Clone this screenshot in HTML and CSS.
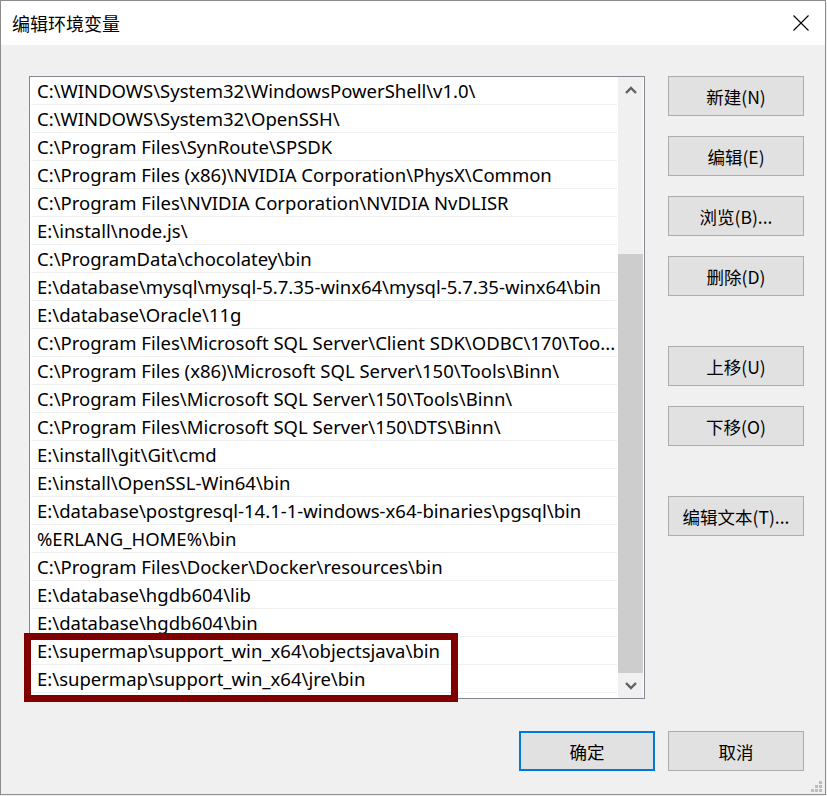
FILE: index.html
```html
<!DOCTYPE html>
<html lang="zh-CN">
<head>
<meta charset="utf-8">
<title>编辑环境变量</title>
<link rel="stylesheet" href="styles.css">
</head>
<body>
<div class="window">
  <div class="titlebar">
    <span class="title">编辑环境变量</span>
    <svg class="close" width="16" height="16" viewBox="0 0 16 16"><path d="M0.5 0.5 L15.5 15.5 M15.5 0.5 L0.5 15.5" stroke="#000" stroke-width="1.1" fill="none"/></svg>
  </div>
  <div class="content">
    <div class="main">
      <div class="listbox">
        <ul class="rows">
          <li class="row">C:\WINDOWS\System32\WindowsPowerShell\v1.0\</li>
          <li class="row">C:\WINDOWS\System32\OpenSSH\</li>
          <li class="row">C:\Program Files\SynRoute\SPSDK</li>
          <li class="row">C:\Program Files (x86)\NVIDIA Corporation\PhysX\Common</li>
          <li class="row">C:\Program Files\NVIDIA Corporation\NVIDIA NvDLISR</li>
          <li class="row">E:\install\node.js\</li>
          <li class="row">C:\ProgramData\chocolatey\bin</li>
          <li class="row">E:\database\mysql\mysql-5.7.35-winx64\mysql-5.7.35-winx64\bin</li>
          <li class="row">E:\database\Oracle\11g</li>
          <li class="row">C:\Program Files\Microsoft SQL Server\Client SDK\ODBC\170\Too...</li>
          <li class="row">C:\Program Files (x86)\Microsoft SQL Server\150\Tools\Binn\</li>
          <li class="row">C:\Program Files\Microsoft SQL Server\150\Tools\Binn\</li>
          <li class="row">C:\Program Files\Microsoft SQL Server\150\DTS\Binn\</li>
          <li class="row">E:\install\git\Git\cmd</li>
          <li class="row">E:\install\OpenSSL-Win64\bin</li>
          <li class="row">E:\database\postgresql-14.1-1-windows-x64-binaries\pgsql\bin</li>
          <li class="row">%ERLANG_HOME%\bin</li>
          <li class="row">C:\Program Files\Docker\Docker\resources\bin</li>
          <li class="row">E:\database\hgdb604\lib</li>
          <li class="row">E:\database\hgdb604\bin</li>
          <li class="row">E:\supermap\support_win_x64\objectsjava\bin</li>
          <li class="row">E:\supermap\support_win_x64\jre\bin</li>
        </ul>
        <div class="scrollbar">
          <div class="sb-btn">
            <svg width="12" height="8" viewBox="0 0 12 8"><path d="M1 7 L6 2 L11 7" stroke="#606060" stroke-width="2.4" fill="none"/></svg>
          </div>
          <div class="sb-track">
            <div class="sb-thumb"></div>
          </div>
          <div class="sb-btn">
            <svg width="12" height="8" viewBox="0 0 12 8"><path d="M1 1 L6 6 L11 1" stroke="#606060" stroke-width="2.4" fill="none"/></svg>
          </div>
        </div>
      </div>
      <div class="side">
        <div class="group">
          <button class="btn">新建(N)</button>
          <button class="btn">编辑(E)</button>
          <button class="btn">浏览(B)...</button>
          <button class="btn">删除(D)</button>
        </div>
        <div class="group">
          <button class="btn">上移(U)</button>
          <button class="btn">下移(O)</button>
        </div>
        <div class="group">
          <button class="btn">编辑文本(T)...</button>
        </div>
      </div>
    </div>
    <div class="footer">
      <button class="btn primary">确定</button>
      <button class="btn">取消</button>
    </div>
    <svg class="grip" width="12" height="12" viewBox="0 0 12 12">
      <rect x="8" y="0" width="3" height="3" fill="#bdbdbd"/>
      <rect x="4" y="4" width="3" height="3" fill="#bdbdbd"/>
      <rect x="8" y="4" width="3" height="3" fill="#bdbdbd"/>
      <rect x="0" y="8" width="3" height="3" fill="#bdbdbd"/>
      <rect x="4" y="8" width="3" height="3" fill="#bdbdbd"/>
      <rect x="8" y="8" width="3" height="3" fill="#bdbdbd"/>
    </svg>
  </div>
  <div class="highlight"></div>
</div>
</body>
</html>
```

FILE: styles.css
```css
html, body {
  margin: 0;
  padding: 0;
  background: #f0f0f0;
}
body {
  width: 827px;
  height: 796px;
  overflow: hidden;
  font-family: "Noto Sans", "Noto Sans CJK SC", sans-serif;
}
.window {
  position: relative;
  box-sizing: border-box;
  width: 826px;
  height: 795px;
  border: 1px solid #8c8c8c;
  background: #f0f0f0;
  display: flex;
  flex-direction: column;
}
.titlebar {
  height: 44px;
  background: #ffffff;
  display: flex;
  align-items: center;
  justify-content: space-between;
  padding: 0 16px 0 11px;
  flex-shrink: 0;
}
.title {
  font-family: "Noto Sans CJK SC", sans-serif;
  font-size: 18px;
  color: #000;
  margin-top: -1px;
}
.close {
  display: block;
  margin-top: -1px;
}
.content {
  position: relative;
  flex: 1;
  padding: 31px 0 0 28px;
  display: flex;
  flex-direction: column;
}
.main {
  display: flex;
  gap: 23px;
}
.listbox {
  box-sizing: border-box;
  width: 616px;
  height: 623px;
  border: 1px solid #828790;
  background: #ffffff;
  display: flex;
}
.rows {
  list-style: none;
  margin: 0;
  padding: 0 1px 0 0;
  flex: 1;
  min-width: 0;
}
.row {
  box-sizing: border-box;
  height: 28px;
  line-height: 27px;
  padding-left: 6px;
  margin-left: 1px;
  border-bottom: 1px solid #f0f0f0;
  font-size: 18.5px;
  color: #000;
  white-space: nowrap;
  overflow: hidden;
  text-overflow: clip;
}
.scrollbar {
  width: 25px;
  margin-right: 1px;
  background: #f0f0f0;
  display: flex;
  flex-direction: column;
}
.sb-btn {
  height: 25px;
  display: flex;
  align-items: center;
  justify-content: center;
  flex-shrink: 0;
}
.sb-track {
  flex: 1;
  display: flex;
  flex-direction: column;
  justify-content: flex-end;
}
.sb-thumb {
  height: 419px;
  background: #cdcdcd;
}
.side {
  display: flex;
  flex-direction: column;
  gap: 50px;
}
.group {
  display: flex;
  flex-direction: column;
  gap: 20px;
}
.btn {
  box-sizing: border-box;
  width: 136px;
  height: 40px;
  border: 1px solid #adadad;
  background: #e1e1e1;
  font-family: "Noto Sans CJK SC", sans-serif;
  font-size: 17.5px;
  color: #000;
  padding: 0;
  margin: 0;
}
.btn.primary {
  border: 2px solid #0078d7;
}
.footer {
  display: flex;
  justify-content: flex-end;
  gap: 13px;
  padding-right: 21px;
  margin-top: 32px;
}
.grip {
  position: absolute;
  right: 2px;
  bottom: 1px;
}
.highlight {
  position: absolute;
  left: 23px;
  top: 632px;
  width: 420px;
  height: 55px;
  border: 7px solid #800000;
}
```
